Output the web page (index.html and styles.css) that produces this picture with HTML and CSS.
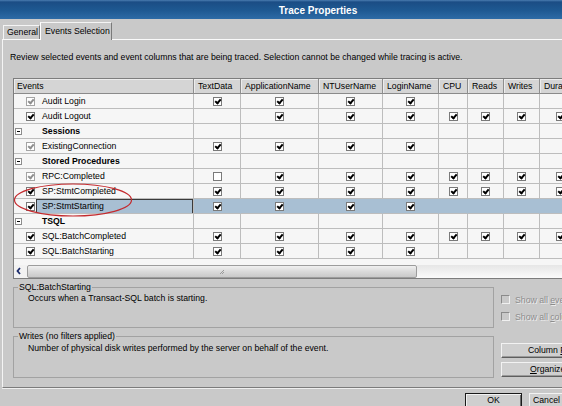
FILE: index.html
```html
<!DOCTYPE html>
<html>
<head>
<meta charset="utf-8">
<title>Trace Properties</title>
<link rel="stylesheet" href="styles.css">
</head>
<body>
<div class="window">
  <div class="titlebar"><span class="title">Trace Properties</span></div>
  <div class="tabs">
    <div class="tab">General</div>
    <div class="tab active">Events Selection</div>
  </div>
  <div class="panel">
    <p class="intro">Review selected events and event columns that are being traced. Selection cannot be changed while tracing is active.</p>
    <div class="gridwrap">
      <table class="grid">
        <colgroup>
          <col class="w-ev"><col class="w-td"><col class="w-app"><col class="w-nt"><col class="w-login"><col class="w-cpu"><col class="w-reads"><col class="w-writes"><col class="w-dur"><col class="w-fill">
        </colgroup>
        <tr class="head">
          <th>Events</th><th>TextData</th><th>ApplicationName</th><th>NTUserName</th><th>LoginName</th><th>CPU</th><th>Reads</th><th>Writes</th><th>Duration</th><th>EndTime</th>
        </tr>
        <tr>
          <td class="ev"><div class="evc"><span class="evbox"><i class="chk on dis"></i></span><span class="evname">Audit Login</span></div></td>
          <td><i class="chk on"></i></td><td><i class="chk on"></i></td><td><i class="chk on"></i></td><td><i class="chk on"></i></td><td></td><td></td><td></td><td></td><td></td>
        </tr>
        <tr>
          <td class="ev"><div class="evc"><span class="evbox"><i class="chk on"></i></span><span class="evname">Audit Logout</span></div></td>
          <td></td><td><i class="chk on"></i></td><td><i class="chk on"></i></td><td><i class="chk on"></i></td><td><i class="chk on"></i></td><td><i class="chk on"></i></td><td><i class="chk on"></i></td><td><i class="chk on"></i></td><td></td>
        </tr>
        <tr>
          <td class="ev"><div class="evc"><span class="minus"></span><span class="catname">Sessions</span></div></td>
          <td></td><td></td><td></td><td></td><td></td><td></td><td></td><td></td><td></td>
        </tr>
        <tr>
          <td class="ev"><div class="evc"><span class="evbox"><i class="chk on dis"></i></span><span class="evname">ExistingConnection</span></div></td>
          <td><i class="chk on"></i></td><td><i class="chk on"></i></td><td><i class="chk on"></i></td><td><i class="chk on"></i></td><td></td><td></td><td></td><td></td><td></td>
        </tr>
        <tr>
          <td class="ev"><div class="evc"><span class="minus"></span><span class="catname">Stored Procedures</span></div></td>
          <td></td><td></td><td></td><td></td><td></td><td></td><td></td><td></td><td></td>
        </tr>
        <tr>
          <td class="ev"><div class="evc"><span class="evbox"><i class="chk on dis"></i></span><span class="evname">RPC:Completed</span></div></td>
          <td><i class="chk"></i></td><td><i class="chk on"></i></td><td><i class="chk on"></i></td><td><i class="chk on"></i></td><td><i class="chk on"></i></td><td><i class="chk on"></i></td><td><i class="chk on"></i></td><td><i class="chk on"></i></td><td></td>
        </tr>
        <tr>
          <td class="ev"><div class="evc"><span class="evbox"><i class="chk on"></i></span><span class="evname">SP:StmtCompleted</span></div></td>
          <td><i class="chk on"></i></td><td><i class="chk on"></i></td><td><i class="chk on"></i></td><td><i class="chk on"></i></td><td><i class="chk on"></i></td><td><i class="chk on"></i></td><td><i class="chk on"></i></td><td><i class="chk on"></i></td><td></td>
        </tr>
        <tr class="sel">
          <td class="ev"><div class="evc"><span class="evbox"><i class="chk on"></i></span><span class="evname">SP:StmtStarting</span></div></td>
          <td><i class="chk on"></i></td><td><i class="chk on"></i></td><td><i class="chk on"></i></td><td><i class="chk on"></i></td><td></td><td></td><td></td><td></td><td></td>
        </tr>
        <tr>
          <td class="ev"><div class="evc"><span class="minus"></span><span class="catname">TSQL</span></div></td>
          <td></td><td></td><td></td><td></td><td></td><td></td><td></td><td></td><td></td>
        </tr>
        <tr>
          <td class="ev"><div class="evc"><span class="evbox"><i class="chk on"></i></span><span class="evname">SQL:BatchCompleted</span></div></td>
          <td><i class="chk on"></i></td><td><i class="chk on"></i></td><td><i class="chk on"></i></td><td><i class="chk on"></i></td><td><i class="chk on"></i></td><td><i class="chk on"></i></td><td><i class="chk on"></i></td><td><i class="chk on"></i></td><td></td>
        </tr>
        <tr>
          <td class="ev"><div class="evc"><span class="evbox"><i class="chk on"></i></span><span class="evname">SQL:BatchStarting</span></div></td>
          <td><i class="chk on"></i></td><td><i class="chk on"></i></td><td><i class="chk on"></i></td><td><i class="chk on"></i></td><td></td><td></td><td></td><td></td><td></td>
        </tr>
      </table>
      <div class="hscroll">
        <div class="arrow"><svg width="13" height="12" viewBox="0 0 13 12"><polyline points="6,3 3.5,6 6,9" fill="none" stroke="#1c2c6c" stroke-width="1.8"/></svg></div>
        <div class="thumb"><svg width="6" height="6" viewBox="0 0 6 6"><path d="M1 5 L5 1 M3 5 L5 3" stroke="#9a9a9a" stroke-width="1"/></svg></div>
        <div class="track"></div>
      </div>
    </div>
    <div class="lower">
      <div class="groups">
        <fieldset class="group g1">
          <legend>SQL:BatchStarting</legend>
          <div class="desc">Occurs when a Transact-SQL batch is starting.</div>
        </fieldset>
        <fieldset class="group g2">
          <legend>Writes (no filters applied)</legend>
          <div class="desc">Number of physical disk writes performed by the server on behalf of the event.</div>
        </fieldset>
      </div>
      <div class="side">
        <div class="opt o1"><span class="dbox"></span><span class="dtext">Show all <u>e</u>vents</span></div>
        <div class="opt o2"><span class="dbox"></span><span class="dtext">Show all <u>c</u>olumns</span></div>
        <div class="btn b-filters">Column <u>F</u>ilters...</div>
        <div class="btn b-organize"><u>O</u>rganize Columns...</div>
      </div>
    </div>
  </div>
  <div class="footer">
    <div class="btn ok">OK</div>
    <div class="btn cancel">Cancel</div>
  </div>
  <svg class="mark" width="124" height="38" viewBox="0 0 124 38"><ellipse cx="61" cy="18" rx="58.5" ry="16" fill="none" stroke="#c42a2e" stroke-width="1.2"/></svg>
</div>
</body>
</html>
```
FILE: styles.css
```css
* { box-sizing: border-box; }
html, body { margin: 0; padding: 0; }
body {
  width: 562px;
  height: 406px;
  overflow: hidden;
  background: #c9c9c9;
  font-family: "Liberation Sans", Arial, sans-serif;
  font-size: 8.7px;
  color: #000;
}
.window {
  width: 636px;
  height: 406px;
  position: relative;
  background: #c9c9c9;
}
.titlebar {
  height: 19px;
  background: linear-gradient(#4a7cb0 0, #1b4d85 2px, #1e5992 55%, #2d6ba6 100%);
  display: flex;
  justify-content: center;
  align-items: center;
}
.title {
  color: #fff;
  font-weight: bold;
  font-size: 10px;
  padding-top: 1px;
}
.tabs {
  height: 20px;
  display: flex;
  align-items: flex-end;
  padding-left: 3px;
}
.tab {
  height: 14px;
  width: 37px;
  padding: 0 3px;
  border: 1px solid;
  border-color: #f4f4f4 #7a7a7a transparent #f4f4f4;
  border-bottom: 0;
  line-height: 13px;
  white-space: nowrap;
}
.tab.active {
  height: 18px;
  width: 72px;
  padding: 2px 4px 0;
  margin-bottom: -1px;
  background: #c9c9c9;
  border-left-color: #fff;
  position: relative;
  z-index: 1;
}
.panel {
  margin-left: 2px;
  height: 349px;
  border-top: 1px solid #fafafa;
  border-left: 1px solid #f4f4f4;
  border-bottom: 1px solid #7c7c7c;
  box-shadow: 0 1px 0 #efefef;
  padding: 0 11px 0 10px;
}
.intro {
  margin: 11px 0 0 -3px;
  line-height: 12px;
  height: 12px;
  white-space: nowrap;
}
.gridwrap {
  margin-top: 15px;
  height: 201px;
  border: 1px solid #7d7d7d;
  background: #f6f6f6;
  overflow: hidden;
}
.grid {
  table-layout: fixed;
  border-collapse: separate;
  border-spacing: 0;
  width: 608px;
}
.w-ev { width: 180px; }
.w-td { width: 47px; }
.w-app { width: 78px; }
.w-nt { width: 64px; }
.w-login { width: 56px; }
.w-cpu { width: 29px; }
.w-reads { width: 36px; }
.w-writes { width: 36px; }
.w-dur { width: 42px; }
.w-fill { width: 40px; }
.grid th, .grid td {
  height: 15px;
  padding: 0;
  border-right: 1px solid #bdbdbd;
  border-bottom: 1px solid #bdbdbd;
  white-space: nowrap;
  overflow: hidden;
}
.grid th {
  background: #d5d5d5;
  border-right-color: #8e8e8e;
  border-bottom-color: #8a8a8a;
  box-shadow: inset 1px 1px 0 #ececec;
  font-weight: normal;
  text-align: left;
  padding-left: 4px;
  line-height: 13px;
}
.grid th:first-child { padding-left: 3px; }
.grid td {
  text-align: center;
  vertical-align: middle;
  line-height: 0;
}
.grid td.ev { text-align: left; line-height: 14px; }
.evc {
  display: flex;
  align-items: center;
  height: 14px;
}
.evbox {
  width: 22px;
  height: 14px;
  padding-left: 12px;
  display: flex;
  align-items: center;
}
.evname {
  flex: 1;
  height: 14px;
  padding-left: 6px;
  line-height: 14px;
}
.catname {
  margin-left: 20px;
  font-weight: bold;
  line-height: 14px;
}
.minus {
  margin-left: 1px;
  width: 7px;
  height: 7px;
  border: 1px solid #8c8c8c;
  background: #fff;
  position: relative;
}
.minus::after {
  content: "";
  position: absolute;
  left: 1px;
  top: 2px;
  width: 3px;
  height: 1px;
  background: #000;
}
.chk {
  display: inline-block;
  width: 9px;
  height: 9px;
  border: 1px solid #7a7a7a;
  background: #fff;
  position: relative;
  vertical-align: middle;
}
.chk.on::after {
  content: "";
  position: absolute;
  left: 2px;
  top: 0;
  width: 2px;
  height: 4px;
  border: solid #000;
  border-width: 0 2px 2px 0;
  transform: rotate(40deg);
}
.chk.dis { border-color: #a4a4a4; }
.chk.dis::after { border-color: #8e8e8e; }
.grid tr.sel td { background: #a8bfd3; border-right-color: #a8bfd3; }
.grid tr.sel td.ev { background: #f6f6f6; border-right-color: #bdbdbd; }
.grid tr.sel .evname {
  background: #a8bfd3;
  border: 1px solid #3a3a3a;
  padding-left: 5px;
  height: 15px;
  line-height: 13px;
  margin-bottom: -1px;
}
.hscroll {
  margin-top: 6px;
  height: 13px;
  display: flex;
}
.arrow {
  width: 13px;
  background: #f2f2f2;
}
.arrow svg { display: block; }
.thumb {
  width: 390px;
  border: 1px solid #9c9c9c;
  border-radius: 2px;
  background: linear-gradient(#f0f0f0, #dadada 50%, #c9c9c9);
  display: flex;
  justify-content: center;
  align-items: center;
}
.track {
  flex: 1;
  background: linear-gradient(#e6e6e6, #fbfbfb);
}
.lower {
  display: flex;
  gap: 7px;
}
.groups {
  flex: 1;
  display: flex;
  flex-direction: column;
}
.group {
  margin: 3px 0 0;
  padding: 0 4px;
  border: 1px solid #a2a2a2;
  min-width: 0;
}
.g1 { height: 46px; }
.g2 { height: 47px; }
.group legend {
  padding: 0 1px;
  line-height: 11px;
}
.desc {
  margin-left: 10px;
  line-height: 11px;
}
.g2 .desc { margin-top: 1px; }
.side {
  width: 124px;
  display: flex;
  flex-direction: column;
}
.opt {
  display: flex;
  align-items: center;
  height: 9px;
  color: #8d8d8d;
  text-shadow: 1px 1px 0 #ececec;
  white-space: nowrap;
}
.o1 { margin-top: 16px; }
.o2 { margin-top: 8px; }
.dbox {
  width: 9px;
  height: 9px;
  flex: none;
  border: 1px solid;
  border-color: #8a8a8a #f0f0f0 #f0f0f0 #8a8a8a;
  background: #c9c9c9;
  margin-right: 5px;
}
.btn {
  height: 15px;
  line-height: 13px;
  background: #cfcfcf;
  border: 1px solid;
  border-color: #f2f2f2 #5e5e5e #5e5e5e #f2f2f2;
  box-shadow: inset -1px -1px 0 #9a9a9a;
  white-space: nowrap;
}
.b-filters { margin-top: 22px; padding-left: 26px; }
.b-organize { margin-top: 4px; padding-left: 28px; }
.footer {
  display: flex;
  justify-content: flex-end;
  gap: 7px;
  padding: 5px 50px 0 0;
}
.footer .btn {
  width: 57px;
  height: 18px;
  text-align: center;
}
.footer .ok {
  border: 1px solid #1a1a1a;
  box-shadow: inset 1px 1px 0 #f2f2f2, inset -1px -1px 0 #6a6a6a;
}
.footer .cancel { text-align: left; padding-left: 3px; }
.mark {
  position: absolute;
  left: 12px;
  top: 182px;
}
```
